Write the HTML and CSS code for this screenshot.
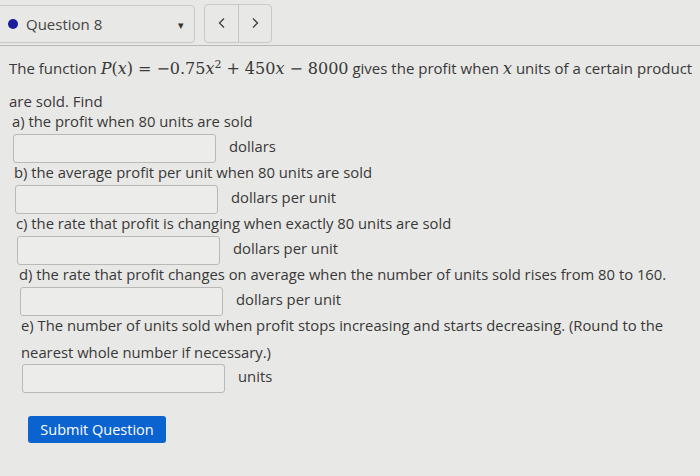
FILE: index.html
```html
<!DOCTYPE html>
<html lang="en">
<head>
    <meta charset="UTF-8">
    <meta name="viewport" content="width=device-width, initial-scale=1.0">
    <title>Question 8</title>
    <link rel="stylesheet" href="styles.css">
</head>
<body>
    <div class="topbar">
        <div class="qselect">
            <span class="dot"></span>
            <span class="qname">Question 8</span>
            <span class="caret">&#9662;</span>
        </div>
        <div class="navgroup">
            <button class="navbtn">
                <svg width="10" height="12" viewBox="0 0 10 12"><path d="M7 1.5 L2.5 6 L7 10.5" fill="none" stroke="#444" stroke-width="1.4"/></svg>
            </button>
            <button class="navbtn">
                <svg width="10" height="12" viewBox="0 0 10 12"><path d="M3 1.5 L7.5 6 L3 10.5" fill="none" stroke="#444" stroke-width="1.4"/></svg>
            </button>
        </div>
    </div>

    <div class="question">
        <p class="intro">
            The function <span class="math"><i>P</i>(<i>x</i>)<span class="op">=</span>&minus;0.75<i>x</i><sup>2</sup><span class="op">+</span>450<i>x</i><span class="op">&minus;</span>8000</span> gives the profit when <span class="math"><i>x</i></span> units of a certain product<br>
            are sold. Find
        </p>

        <div class="part part-a">
            <p>a) the profit when 80 units are sold</p>
            <div class="answer"><input type="text"><span class="unit">dollars</span></div>
        </div>
        <div class="part part-b">
            <p>b) the average profit per unit when 80 units are sold</p>
            <div class="answer"><input type="text"><span class="unit">dollars per unit</span></div>
        </div>
        <div class="part part-c">
            <p>c) the rate that profit is changing when exactly 80 units are sold</p>
            <div class="answer"><input type="text"><span class="unit">dollars per unit</span></div>
        </div>
        <div class="part part-d">
            <p>d) the rate that profit changes on average when the number of units sold rises from 80 to 160.</p>
            <div class="answer"><input type="text"><span class="unit">dollars per unit</span></div>
        </div>
        <div class="part part-e">
            <p class="wrap">e) The number of units sold when profit stops increasing and starts decreasing. (Round to the<br>nearest whole number if necessary.)</p>
            <div class="answer"><input type="text"><span class="unit">units</span></div>
        </div>

        <button class="submit">Submit Question</button>
    </div>
</body>
</html>
```

FILE: styles.css
```css
body {
    margin: 0;
    padding: 0;
    background-color: #e8e8e6;
    font-family: "Open Sans", Arial, sans-serif;
    color: #383838;
    overflow: hidden;
}
.topbar {
    display: flex;
    align-items: center;
    height: 45px;
    border-bottom: 1px solid #b9b9b9;
}
.qselect {
    display: flex;
    align-items: center;
    width: 199px;
    height: 38px;
    margin-left: -4px;
    margin-top: 3px;
    border: 1px solid #c9c9c7;
    border-radius: 4px;
    box-sizing: border-box;
}
.dot {
    width: 10px;
    height: 10px;
    border-radius: 50%;
    background: #1c1c9c;
    margin-left: 11px;
}
.qname {
    font-size: 15px;
    margin-left: 8px;
    color: #444;
}
.caret {
    margin-left: auto;
    margin-right: 10px;
    font-size: 11px;
    color: #333;
}
.navgroup {
    display: flex;
    margin-left: 9px;
    margin-top: 1px;
    border: 1px solid #c9c9c7;
    border-radius: 4px;
    height: 39px;
    box-sizing: border-box;
}
.navbtn {
    width: 33px;
    background: none;
    border: none;
    padding: 0;
    display: flex;
    align-items: center;
    justify-content: center;
}
.navbtn + .navbtn {
    border-left: 1px solid #c4c4c2;
}
.question {
    padding: 6px 0 0 9px;
    font-size: 15px;
}
p {
    margin: 0;
    line-height: 19px;
}
.intro {
    line-height: 33px;
    margin-bottom: -6px;
}
.math {
    font-family: "DejaVu Serif", "Liberation Serif", serif;
    font-size: 16px;
}
.op {
    padding: 0 5px;
}
.math sup {
    font-size: 11px;
    line-height: 0;
    vertical-align: 6px;
}
.wrap {
    line-height: 27px;
    margin-top: -4px;
    margin-bottom: -5px;
}
.part {
    font-size: 14.8px;
}
.part-a { margin-left: 3px; }
.part-b { margin-left: 5px; }
.part-c { margin-left: 7px; }
.part-d { margin-left: 10px; }
.part-e { margin-left: 12px; }
.answer {
    display: flex;
    align-items: flex-start;
    margin-top: 3px;
    padding-left: 1px;
}
input {
    width: 203px;
    height: 29px;
    box-sizing: border-box;
    border: 1px solid #b9b9b7;
    border-radius: 3px;
    background: #ececea;
    margin: 0;
}
.unit {
    margin-left: 13px;
    line-height: 24px;
}
.submit {
    margin: 23px 0 0 19px;
    width: 138px;
    height: 27px;
    background: #0b63d0;
    color: white;
    border: none;
    border-radius: 3px;
    font-family: "Open Sans", Arial, sans-serif;
    font-size: 14.5px;
    padding: 0;
}
```
